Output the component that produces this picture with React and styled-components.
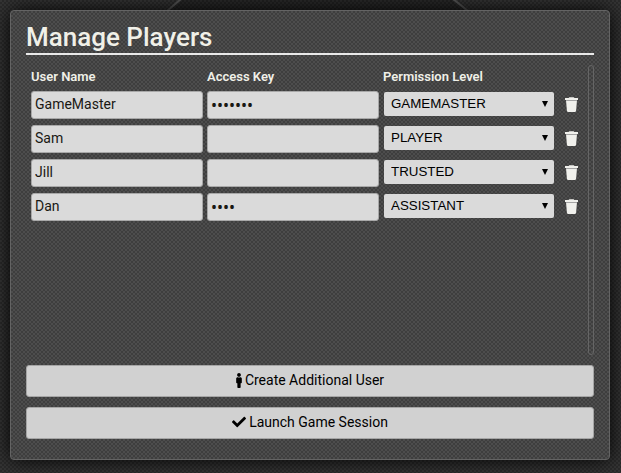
import React from "react";
import styled, { createGlobalStyle } from "styled-components";

const GlobalStyle = createGlobalStyle`
  *, *::before, *::after { box-sizing: border-box; }
  body {
    margin: 0;
    background: #323232;
    color: #f0f0e8;
    font-family: Roboto, "Noto Sans", sans-serif;
    font-size: 14px;
  }
`;

const weave = `repeating-conic-gradient(rgba(0, 0, 0, 0.17) 0% 25%, rgba(255, 255, 255, 0.01) 0% 50%) 0 0 / 4px 4px`;

const Page = styled.main`
  position: relative;
  display: flex;
  min-height: 100vh;
  padding: 10px 11px 13px 10px;
  background: ${weave}, #333;
`;

const Backdrop = styled.svg`
  position: absolute;
  top: 0;
  left: 50%;
  width: 314px;
  height: 12px;
  transform: translateX(-50%);
`;

const Dialog = styled.section`
  position: relative;
  display: flex;
  flex: 1;
  flex-direction: column;
  gap: 10px;
  padding: 10px 15px 20px;
  border: 1px solid #646464;
  border-radius: 4px;
  background: ${weave}, #4b4b4b;
  box-shadow: 0 0 20px #000;
`;

const Title = styled.h1`
  margin: 0;
  border-bottom: 2px solid #e8e8e8;
  font-size: 26px;
  font-weight: 500;
  line-height: 32px;
`;

const ListArea = styled.div`
  display: flex;
  flex: 1;
  align-items: stretch;
  gap: 5px;
  padding-left: 5px;
`;

const TableWrap = styled.div`
  flex: 1;
`;

const ScrollTrack = styled.div`
  width: 6px;
  border: 1px solid #656565;
  border-radius: 3px;
`;

const PlayerTable = styled.table`
  width: 100%;
  border-collapse: collapse;
  table-layout: fixed;
`;

const HeadCell = styled.th`
  width: ${(p) => (p.$narrow ? "24px" : "auto")};
  height: 23px;
  padding: 0;
  font-size: 13px;
  font-weight: 600;
  line-height: 22px;
  text-align: left;
`;

const Cell = styled.td`
  height: 34px;
  padding: ${(p) => (p.$select ? "0 5px 0 1px" : "0 4px 0 0")};
  vertical-align: middle;
`;

const TextField = styled.input`
  display: block;
  width: 100%;
  height: 28px;
  padding: 0 3px 2px;
  border: 1px solid #a8a8a8;
  border-radius: 3px;
  background: #dadada;
  color: #191813;
  font: inherit;
`;

const KeyField = styled(TextField)`
  padding: 0 3px;
  font-family: "Noto Sans", sans-serif;
  font-size: 16px;
`;

const SelectBox = styled.div`
  position: relative;
  display: flex;
  margin-bottom: 2px;
`;

const Select = styled.select`
  width: 100%;
  height: 24px;
  padding: 0 20px 2px 7px;
  border: 0;
  border-radius: 2px;
  appearance: none;
  background: #dadada;
  color: #000;
  font-family: "Liberation Sans", Arial, sans-serif;
`;

const Arrow = styled.svg`
  position: absolute;
  top: 9px;
  right: 6px;
  width: 6px;
  height: 6px;
  pointer-events: none;
`;

const IconButton = styled.button`
  display: flex;
  margin: 0 0 2px 6px;
  padding: 0;
  border: 0;
  background: none;
  color: #f0f0ec;
  cursor: pointer;
`;

const ActionButton = styled.button`
  display: flex;
  align-items: center;
  justify-content: center;
  gap: 3px;
  height: 32px;
  padding: 0 0 2px;
  border: 1px solid #a5a5a5;
  border-radius: 3px;
  background: #d1d1d1;
  color: #000;
  font: inherit;
  cursor: pointer;
`;

const TrashIcon = () => (
  <svg width="13" height="15" viewBox="0 0 13 15" aria-hidden="true">
    <path fill="currentColor" d="M4.3.2h4.400l.7.8h3.200c.3 0 .4.200.4.400V3H0V1.400C0 1.200.1 1 .4 1h3.200zM1 3h11l-.9 10.800c0 .7-.5 1.200-1.200 1.200H3.100c-.7 0-1.200-.5-1.200-1.200z" />
    <path fill="#a4a4a4" d="M1 3h11v1H1z" />
  </svg>
);

const PersonIcon = () => (
  <svg width="6" height="15" viewBox="0 0 192 512" aria-hidden="true">
    <path d="M96 0c35.346 0 64 28.654 64 64s-28.654 64-64 64-64-28.654-64-64S60.654 0 96 0m48 144h-11.360c-22.711 10.443-49.590 10.894-73.280 0H48c-26.510 0-48 21.490-48 48v136c0 13.255 10.745 24 24 24h16v136c0 13.255 10.745 24 24 24h64c13.255 0 24-10.745 24-24V352h16c13.255 0 24-10.745 24-24V192c0-26.510-21.490-48-48-48z" />
  </svg>
);

const CheckIcon = () => (
  <svg width="14" height="14" viewBox="0 0 512 512" aria-hidden="true">
    <path d="M173.898 439.404l-166.400-166.400c-9.997-9.997-9.997-26.206 0-36.204l36.203-36.204c9.997-9.998 26.207-9.998 36.204 0L192 312.690 432.095 72.596c9.997-9.997 26.207-9.997 36.204 0l36.203 36.204c9.997 9.997 9.997 26.206 0 36.204l-294.400 294.401c-9.998 9.997-26.207 9.997-36.204-.001z" />
  </svg>
);

const roles = ["PLAYER", "TRUSTED", "ASSISTANT", "GAMEMASTER"];

const players = [
  { name: "GameMaster", key: "•••••••", role: "GAMEMASTER" },
  { name: "Sam", key: "", role: "PLAYER" },
  { name: "Jill", key: "", role: "TRUSTED" },
  { name: "Dan", key: "••••", role: "ASSISTANT" },
];

function PlayerRow({ player }) {
  return (
    <tr>
      <Cell>
        <TextField aria-labelledby="col-name" defaultValue={player.name} />
      </Cell>
      <Cell>
        <KeyField type="password" aria-labelledby="col-key" defaultValue={player.key} />
      </Cell>
      <Cell $select>
        <SelectBox>
          <Select aria-labelledby="col-role" defaultValue={player.role}>
            {roles.map((role) => (
              <option key={role}>{role}</option>
            ))}
          </Select>
          <Arrow viewBox="0 0 7 7" aria-hidden="true">
            <path d="M0 0h7L3.500 7z" />
          </Arrow>
        </SelectBox>
      </Cell>
      <Cell>
        <IconButton type="button" aria-label={`Delete ${player.name}`}>
          <TrashIcon />
        </IconButton>
      </Cell>
    </tr>
  );
}

export default function App() {
  return (
    <>
      <GlobalStyle />
      <Page>
        <Backdrop viewBox="0 0 314 12" aria-hidden="true">
          <path d="M27 0h272l14 12H13z" fill="#000" fillOpacity=".2" />
          <path d="M27 -1L12 12M299 -1l15 12" stroke="#555" strokeWidth="2" />
        </Backdrop>
        <Dialog aria-labelledby="title">
          <Title id="title">Manage Players</Title>
          <ListArea>
            <TableWrap>
              <PlayerTable>
                <thead>
                  <tr>
                    <HeadCell id="col-name">User Name</HeadCell>
                    <HeadCell id="col-key">Access Key</HeadCell>
                    <HeadCell id="col-role">Permission Level</HeadCell>
                    <HeadCell $narrow aria-label="Delete" />
                  </tr>
                </thead>
                <tbody>
                  {players.map((player) => (
                    <PlayerRow key={player.name} player={player} />
                  ))}
                </tbody>
              </PlayerTable>
            </TableWrap>
            <ScrollTrack />
          </ListArea>
          <ActionButton type="button">
            <PersonIcon />
            Create Additional User
          </ActionButton>
          <ActionButton type="button">
            <CheckIcon />
            Launch Game Session
          </ActionButton>
        </Dialog>
      </Page>
    </>
  );
}
